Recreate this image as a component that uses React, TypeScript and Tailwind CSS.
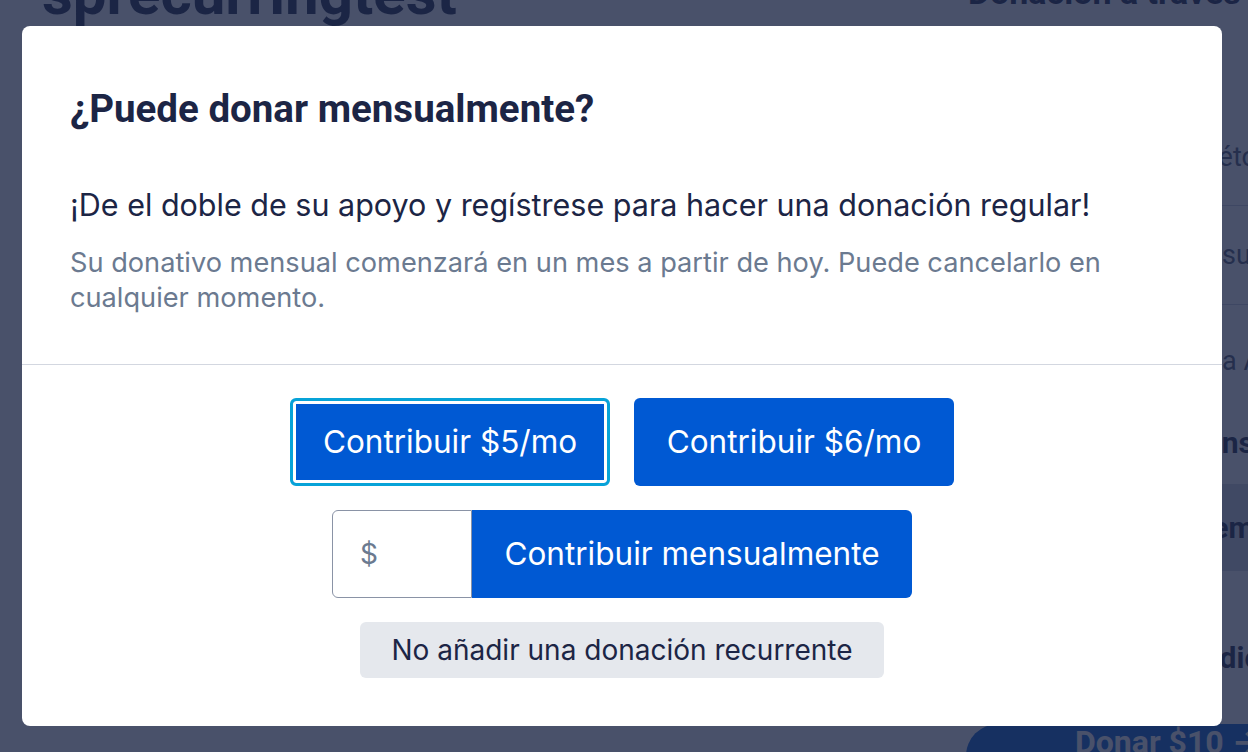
import { useState } from "react";

const sans = "font-['Inter','Noto_Sans',sans-serif]";
const head = "font-['Roboto','Inter',sans-serif]";

const Background = () => {
  return (
    <section className={`flex w-full h-[752px] overflow-hidden bg-white ${head}`}>
      <section className="flex-1 pl-[42px]">
        <h1 className="mt-[-36px] text-[60px] leading-[60px] font-bold text-[#1c2545]">
          sprecurringtest
        </h1>
      </section>
      <aside className="w-[282px] shrink-0 flex flex-col text-[#4b5470] [&>*]:shrink-0">
        <h2 className="mt-[-24px] h-[32px] pl-[2px] text-[34px] leading-[32px] font-bold whitespace-nowrap text-[#1c2545]">
          Donación a través
        </h2>
        <div className="mt-[102px] h-[96px] flex items-center border-b border-[#c9cedb] pl-[229px] text-[27px] whitespace-nowrap">
          Método
        </div>
        <div className="h-[99px] flex items-center border-b border-[#c9cedb] pl-[256px] text-[27px] whitespace-nowrap">
          su
        </div>
        <div className="h-[112px] flex items-center pl-[256px] text-[27px] whitespace-nowrap">
          a América
        </div>
        <div className="h-[67px] flex items-center pb-[16px] pl-[247px] text-[30px] font-bold whitespace-nowrap text-[#1c2545]">
          Instrucciones
        </div>
        <div className="h-[87px] flex items-center bg-[#d2d6e2] pl-[229px] text-[30px] font-bold whitespace-nowrap text-[#1c2545]">
          Tema
        </div>
        <div className="h-[153px] flex items-center pt-[20px] pl-[237px] text-[30px] font-bold whitespace-nowrap text-[#1c2545]">
          Edición
        </div>
        <button className="h-[64px] flex items-start pt-[2px] rounded-l-full bg-[#0059d3] pl-[109px] text-left text-[32px] leading-[32px] font-bold text-white whitespace-nowrap">
          Donar $10 →
        </button>
      </aside>
    </section>
  );
};

const App = () => {
  const [amount, setAmount] = useState("");

  return (
    <main className="relative w-full h-[752px] overflow-hidden">
      <Background />
      <section className="fixed inset-0 z-40 flex items-center justify-center pr-[4px] bg-[rgba(28,37,69,0.8)]">
        <section className={`w-[1200px] h-[700px] flex flex-col bg-white rounded-lg ${sans}`}>
          <header className="px-12 pt-[61px] pb-[49px] border-b border-[#d3d7e0]">
            <h2 className={`text-[38.5px] leading-[44px] font-bold text-[#1c2545] ${head}`}>
              ¿Puede donar mensualmente?
            </h2>
            <p className="mt-[54px] text-[30.5px] leading-[40px] text-[#1c2545]">
              ¡De el doble de su apoyo y regístrese para hacer una donación regular!
            </p>
            <p className="mt-[20px] text-[27.2px] leading-[35px] text-[#6b7a90]">
              Su donativo mensual comenzará en un mes a partir de hoy. Puede cancelarlo en cualquier momento.
            </p>
          </header>
          <section className="flex flex-col items-center gap-6 pt-[33px]">
            <div className="flex gap-6">
              <button className="w-[320px] h-[88px] rounded-md border-[3px] border-[#07a3d8] bg-[#0059d3] shadow-[inset_0_0_0_3px_#ffffff] text-[31.5px] text-white">
                Contribuir $5/mo
              </button>
              <button className="w-[320px] h-[88px] rounded-md bg-[#0059d3] text-[31.5px] text-white">
                Contribuir $6/mo
              </button>
            </div>
            <div className="flex">
              <label className="w-[140px] h-[88px] flex items-center rounded-l-md border border-[#8a93a6] pl-[27px] text-[28px] text-[#6b7a90]">
                <span>$</span>
                <input
                  value={amount}
                  onChange={(e) => setAmount(e.target.value)}
                  className="w-full pl-2 outline-none bg-transparent text-[#1c2545]"
                />
              </label>
              <button className="w-[440px] h-[88px] rounded-r-md bg-[#0059d3] text-[31.5px] text-white">
                Contribuir mensualmente
              </button>
            </div>
            <button className="w-[524px] h-[56px] rounded-md bg-[#e5e8ed] text-[28px] text-[#1c2545]">
              No añadir una donación recurrente
            </button>
          </section>
        </section>
      </section>
    </main>
  );
};

export default App;
